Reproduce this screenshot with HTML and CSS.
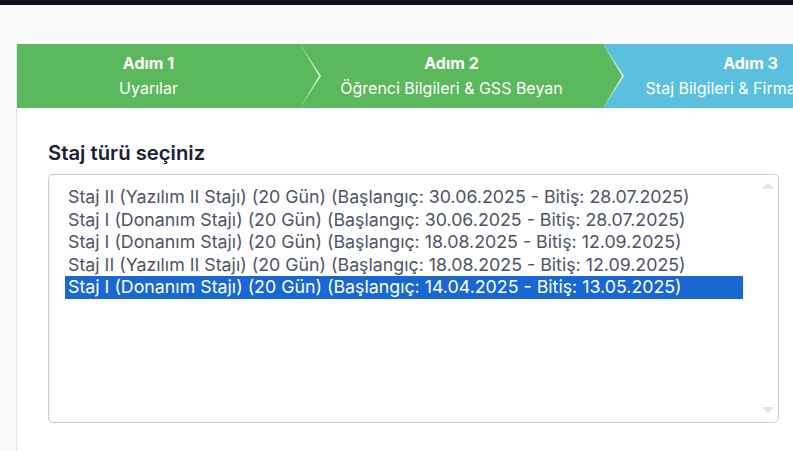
FILE: index.html
```html
<!DOCTYPE html>
<html lang="tr">
<head>
<meta charset="utf-8">
<title>Staj Başvurusu</title>
<link rel="stylesheet" href="styles.css">
</head>
<body>
<div class="topbar"></div>
<div class="page">
  <div class="card">
    <div class="steps">
      <div class="step step-1 done">
        <div class="step-title">Adım 1</div>
        <div class="step-sub">Uyarılar</div>
      </div>
      <div class="step step-2 done">
        <div class="step-title">Adım 2</div>
        <div class="step-sub">Öğrenci Bilgileri &amp; GSS Beyan</div>
      </div>
      <div class="step step-3 current">
        <div class="step-title">Adım 3</div>
        <div class="step-sub">Staj Bilgileri &amp; Firma Bilgileri</div>
      </div>
    </div>
    <div class="content">
      <div class="label">Staj türü seçiniz</div>
      <div class="listbox">
        <div class="options">
          <div class="option">Staj II (Yazılım II Stajı) (20 Gün) (Başlangıç: 30.06.2025 - Bitiş: 28.07.2025)</div>
          <div class="option">Staj I (Donanım Stajı) (20 Gün) (Başlangıç: 30.06.2025 - Bitiş: 28.07.2025)</div>
          <div class="option">Staj I (Donanım Stajı) (20 Gün) (Başlangıç: 18.08.2025 - Bitiş: 12.09.2025)</div>
          <div class="option">Staj II (Yazılım II Stajı) (20 Gün) (Başlangıç: 18.08.2025 - Bitiş: 12.09.2025)</div>
          <div class="option selected">Staj I (Donanım Stajı) (20 Gün) (Başlangıç: 14.04.2025 - Bitiş: 13.05.2025)</div>
        </div>
        <div class="scroll-up"></div>
        <div class="scroll-down"></div>
      </div>
    </div>
  </div>
</div>
</body>
</html>
```

FILE: styles.css
```css
html, body {
  margin: 0;
  padding: 0;
  overflow: hidden;
}
body {
  background: #fafafa;
  font-family: Inter, "Noto Sans", sans-serif;
  width: 793px;
  height: 451px;
}
.topbar {
  height: 5px;
  background: #0d1117;
}
.page {
  padding: 39px 0 0 16px;
}
.card {
  width: 776px;
  height: 407px;
  background: #ffffff;
  border-left: 1px solid #e6e6e6;
  overflow: hidden;
}
.steps {
  display: flex;
  height: 64px;
}
.step {
  position: relative;
  flex-shrink: 0;
  box-sizing: border-box;
  color: #ffffff;
  text-align: center;
  padding-top: 7px;
  font-size: 16px;
  line-height: 25px;
  white-space: nowrap;
}
.step.done {
  background: #5cb85c;
}
.step.current {
  background: #5bc0de;
}
.step-title {
  font-weight: 700;
}
.step-1 {
  width: 283px;
  padding-right: 20px;
  z-index: 3;
}
.step-2 {
  width: 303px;
  z-index: 2;
}
.step-3 {
  width: 303px;
  padding-right: 8px;
  z-index: 1;
}
.step-1::before,
.step-2::before {
  content: "";
  position: absolute;
  top: 0;
  right: -21px;
  width: 21px;
  height: 100%;
  background: #d9f0d3;
  clip-path: polygon(0 0, 100% 50%, 0 100%);
}
.step-1::after,
.step-2::after {
  content: "";
  position: absolute;
  top: 0;
  right: -19px;
  width: 19px;
  height: 100%;
  background: #5cb85c;
  clip-path: polygon(0 0, 100% 50%, 0 100%);
}
.content {
  padding: 33px 0 0 31px;
}
.label {
  font-size: 20.3px;
  font-weight: 600;
  line-height: 24px;
  color: #1b2133;
  margin-bottom: 9px;
}
.listbox {
  position: relative;
  box-sizing: border-box;
  width: 731px;
  height: 249px;
  border: 1px solid #c9cacf;
  border-radius: 5px;
  padding: 11px 35px 0 16px;
}
.option {
  font-size: 17.8px;
  line-height: 22.5px;
  padding-left: 3px;
  color: #4e5466;
  white-space: nowrap;
}
.option.selected {
  background: #1967d2;
  color: #ffffff;
}
.scroll-up,
.scroll-down {
  position: absolute;
  right: 4px;
  width: 0;
  height: 0;
  border-left: 6px solid transparent;
  border-right: 6px solid transparent;
}
.scroll-up {
  top: 8px;
  border-bottom: 6px solid #e3e3e3;
}
.scroll-down {
  bottom: 9px;
  border-top: 6px solid #e3e3e3;
}
```
